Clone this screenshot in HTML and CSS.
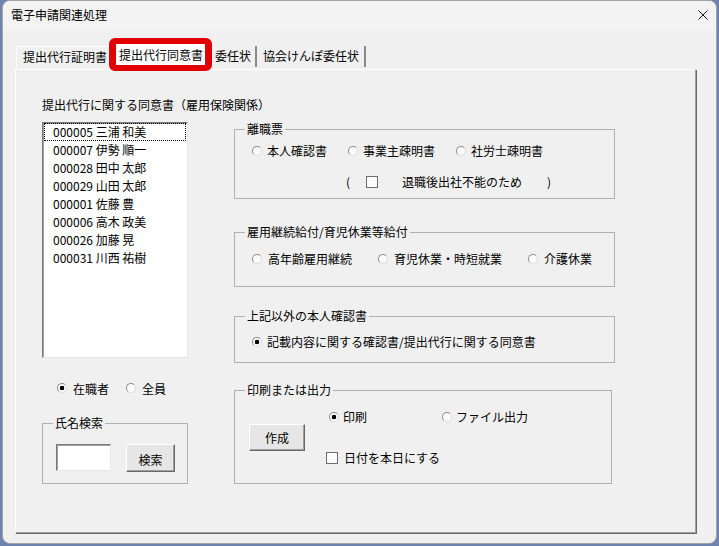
FILE: index.html
```html
<!DOCTYPE html>
<html lang="ja">
<head>
    <meta charset="UTF-8">
    <title>電子申請関連処理</title>
    <link rel="stylesheet" href="styles.css">
</head>
<body>
    <div class="window">
        <!-- タイトルバー -->
        <div class="titlebar">
            <span class="title">電子申請関連処理</span>
            <svg class="close" width="10" height="10" viewBox="0 0 10 10">
                <path d="M0.5 0.5L9.5 9.5M9.5 0.5L0.5 9.5" stroke="#1a1a1a" stroke-width="1" fill="none"/>
            </svg>
        </div>

        <!-- タブ -->
        <div class="tabs">
            <div class="tab tab-first">提出代行証明書</div>
            <div class="tab tab-active">提出代行同意書</div>
            <div class="tab tab-sep tab-3">委任状</div>
            <div class="tab tab-sep tab-4">協会けんぽ委任状</div>
        </div>

        <!-- ページ本体 -->
        <div class="page">
            <div class="heading">提出代行に関する同意書（雇用保険関係）</div>

            <div class="columns">
                <div class="col-left">
                    <ul class="listbox">
                        <li class="focused">000005 三浦 和美</li>
                        <li>000007 伊勢 順一</li>
                        <li>000028 田中 太郎</li>
                        <li>000029 山田 太郎</li>
                        <li>000001 佐藤 豊</li>
                        <li>000006 高木 政美</li>
                        <li>000026 加藤 晃</li>
                        <li>000031 川西 祐樹</li>
                    </ul>

                    <div class="filter">
                        <span class="opt"><span class="radio on"></span>在職者</span>
                        <span class="opt"><span class="radio"></span>全員</span>
                    </div>

                    <fieldset class="group group-search">
                        <legend>氏名検索</legend>
                        <div class="search-row">
                            <div class="textbox"></div>
                            <div class="button btn-search">検索</div>
                        </div>
                    </fieldset>
                </div>

                <div class="col-right">
                    <fieldset class="group g1">
                        <legend>離職票</legend>
                        <div class="row row-g1">
                            <span class="opt"><span class="radio"></span>本人確認書</span>
                            <span class="opt"><span class="radio"></span>事業主疎明書</span>
                            <span class="opt"><span class="radio"></span>社労士疎明書</span>
                        </div>
                        <div class="row row-paren">
                            <span>(</span>
                            <span class="checkbox"></span>
                            <span class="paren-text">退職後出社不能のため</span>
                            <span class="paren-close">)</span>
                        </div>
                    </fieldset>

                    <fieldset class="group g2">
                        <legend>雇用継続給付/育児休業等給付</legend>
                        <div class="row row-g2">
                            <span class="opt"><span class="radio"></span>高年齢雇用継続</span>
                            <span class="opt"><span class="radio"></span>育児休業・時短就業</span>
                            <span class="opt"><span class="radio"></span>介護休業</span>
                        </div>
                    </fieldset>

                    <fieldset class="group g3">
                        <legend>上記以外の本人確認書</legend>
                        <div class="row row-g3">
                            <span class="opt"><span class="radio on"></span>記載内容に関する確認書/提出代行に関する同意書</span>
                        </div>
                    </fieldset>

                    <fieldset class="group g4">
                        <legend>印刷または出力</legend>
                        <div class="output">
                            <div class="button btn-make">作成</div>
                            <div class="output-opts">
                                <div class="row row-print">
                                    <span class="opt"><span class="radio on"></span>印刷</span>
                                    <span class="opt"><span class="radio"></span>ファイル出力</span>
                                </div>
                                <div class="row row-date">
                                    <span class="checkbox"></span>
                                    <span>日付を本日にする</span>
                                </div>
                            </div>
                        </div>
                    </fieldset>
                </div>
            </div>
        </div>
    </div>
</body>
</html>
```

FILE: styles.css
```css
/* 全体 */
html,
body {
    margin: 0;
    padding: 0;
    background-color: #6f84ad;
}

body {
    font-family: "Noto Sans CJK JP", "Noto Sans", sans-serif;
    font-size: 12px;
    color: #000;
}

.window {
    width: 715px;
    height: 544px;
    margin-left: 2px;
    box-sizing: border-box;
    border: 1px solid #a4a4a4;
    border-radius: 8px;
    background-color: #f0f0f0;
    overflow: hidden;
}

/* タイトルバー */
.titlebar {
    height: 30px;
    display: flex;
    align-items: center;
    justify-content: space-between;
    padding: 0 8px 2px 8px;
    box-sizing: border-box;
    background-color: #f3f3f3;
    line-height: 16px;
}

.close {
    display: block;
}

/* タブ */
.tabs {
    height: 38px;
    display: flex;
    align-items: flex-end;
    padding-left: 13px;
    line-height: 20px;
}

.tab {
    height: 23px;
    box-sizing: border-box;
    padding-bottom: 3px;
    white-space: nowrap;
}

.tab-first {
    padding-left: 6px;
    padding-right: 2px;
    border-left: 1px solid #fff;
    border-top: 1px solid #fff;
    padding-top: 0;
}

.tab-active {
    position: relative;
    z-index: 1;
    height: 33px;
    margin-bottom: -2px;
    padding: 0 2px 0 3px;
    border: 7px solid #e00000;
    border-top-width: 6px;
    border-bottom-width: 6px;
    border-radius: 6px;
    background-color: #fff;
    line-height: 21px;
}

.tab-sep {
    border-right: 2px solid #8a8a8a;
    height: 21px;
    margin-bottom: 2px;
    padding-bottom: 1px;
}

.tab-3 {
    padding-left: 3px;
    padding-right: 4px;
}

.tab-4 {
    padding-left: 6px;
    padding-right: 5px;
}

/* ページ */
.page {
    margin-left: 12px;
    width: 681px;
    height: 464px;
    box-sizing: border-box;
    border: 1px solid;
    border-color: #fff #a0a0a0 #a0a0a0 #fff;
    box-shadow: 1px 1px 0 #696969;
    padding: 27px 0 0 26px;
}

.heading {
    line-height: 16px;
}

.columns {
    display: flex;
    margin-top: 9px;
}

.col-left {
    width: 146px;
}

.col-right {
    margin-left: 46px;
}

/* リストボックス */
.listbox {
    list-style-type: none;
    margin: 0;
    padding: 0;
    height: 236px;
    box-sizing: border-box;
    background-color: #fff;
    border: 1px solid;
    border-color: #7a7a7a #e6e6e6 #e6e6e6 #7a7a7a;
    box-shadow: inset 1px 1px 0 #a0a0a0;
}

.listbox li {
    margin: 0 1px;
    padding-left: 9px;
    line-height: 18px;
    height: 18px;
    box-sizing: border-box;
    white-space: nowrap;
}

.listbox li.focused {
    outline: 1px dotted #000;
    outline-offset: -1px;
}

/* ラジオボタン・チェックボックス */
.opt {
    display: inline-flex;
    align-items: center;
    white-space: nowrap;
}

.radio {
    width: 10px;
    height: 10px;
    box-sizing: border-box;
    flex: none;
    border-radius: 50%;
    border: 1px solid;
    border-color: #8c8c8c #dadada #dadada #8c8c8c;
    background: #fbfbfb;
    margin-right: 5px;
}

.radio.on {
    background: radial-gradient(circle, #000 0 2px, #fbfbfb 2.6px);
}

.checkbox {
    display: inline-block;
    width: 12px;
    height: 12px;
    box-sizing: border-box;
    flex: none;
    border: 1px solid #6e6e6e;
    background-color: #fcfcfc;
}

.row {
    display: flex;
    align-items: center;
    height: 20px;
    line-height: 20px;
}

/* 在職者 / 全員 */
.filter {
    display: flex;
    align-items: center;
    height: 20px;
    margin-top: 20px;
    padding-left: 15px;
    gap: 17px;
}

.filter .radio {
    margin-right: 6px;
}

/* グループ枠 */
.group {
    margin: 0;
    padding: 0;
    box-sizing: border-box;
    border: 1px solid #b0b0b0;
    min-inline-size: 0;
}

.group legend {
    margin-left: 10px;
    padding: 0 2px;
    line-height: 14px;
}

.group-search {
    margin-top: 18px;
    width: 146px;
    padding-bottom: 11px;
}

.search-row {
    display: flex;
    margin-top: 14px;
}

.textbox {
    width: 55px;
    height: 27px;
    margin-left: 13px;
    box-sizing: border-box;
    background-color: #fff;
    border: 1px solid;
    border-color: #7a7a7a #e6e6e6 #e6e6e6 #7a7a7a;
    box-shadow: inset 1px 1px 0 #a0a0a0;
}

.button {
    box-sizing: border-box;
    display: flex;
    align-items: center;
    justify-content: center;
    background-color: #e6e6e6;
    border: 1px solid;
    border-color: #fff #696969 #696969 #fff;
    box-shadow: inset -1px -1px 0 #a0a0a0;
}

.btn-search {
    width: 49px;
    height: 28px;
    margin-left: 15px;
    padding-top: 2px;
}

/* 右側のグループ */
.g1,
.g2,
.g3 {
    width: 381px;
}

.g1 {
    padding-bottom: 6px;
}

.row-g1 {
    margin-top: 5px;
    padding-left: 17px;
    gap: 21px;
}

.row-paren {
    margin-top: 11px;
    padding-left: 111px;
}

.row-paren .checkbox {
    margin-left: 16px;
}

.paren-text {
    margin-left: 24px;
}

.paren-close {
    margin-left: 25px;
}

.g2 {
    margin-top: 26px;
    padding-bottom: 17px;
}

.row-g2 {
    margin-top: 10px;
    padding-left: 17px;
    gap: 26px;
}

.row-g2 .radio {
    margin-right: 6px;
}

.g3 {
    margin-top: 22px;
    padding-bottom: 10px;
}

.row-g3 {
    margin-top: 9px;
    padding-left: 17px;
}

.g4 {
    width: 378px;
    margin-top: 20px;
    padding-bottom: 15px;
}

.output {
    display: flex;
}

.btn-make {
    width: 56px;
    height: 27px;
    margin-top: 27px;
    margin-left: 14px;
}

.output-opts {
    margin-left: 21px;
}

.row-print {
    margin-top: 10px;
    padding-left: 3px;
    gap: 75px;
}

.row-print .radio {
    margin-right: 4px;
}

.row-date {
    margin-top: 21px;
}

.row-date .checkbox {
    margin-right: 6px;
}
```
